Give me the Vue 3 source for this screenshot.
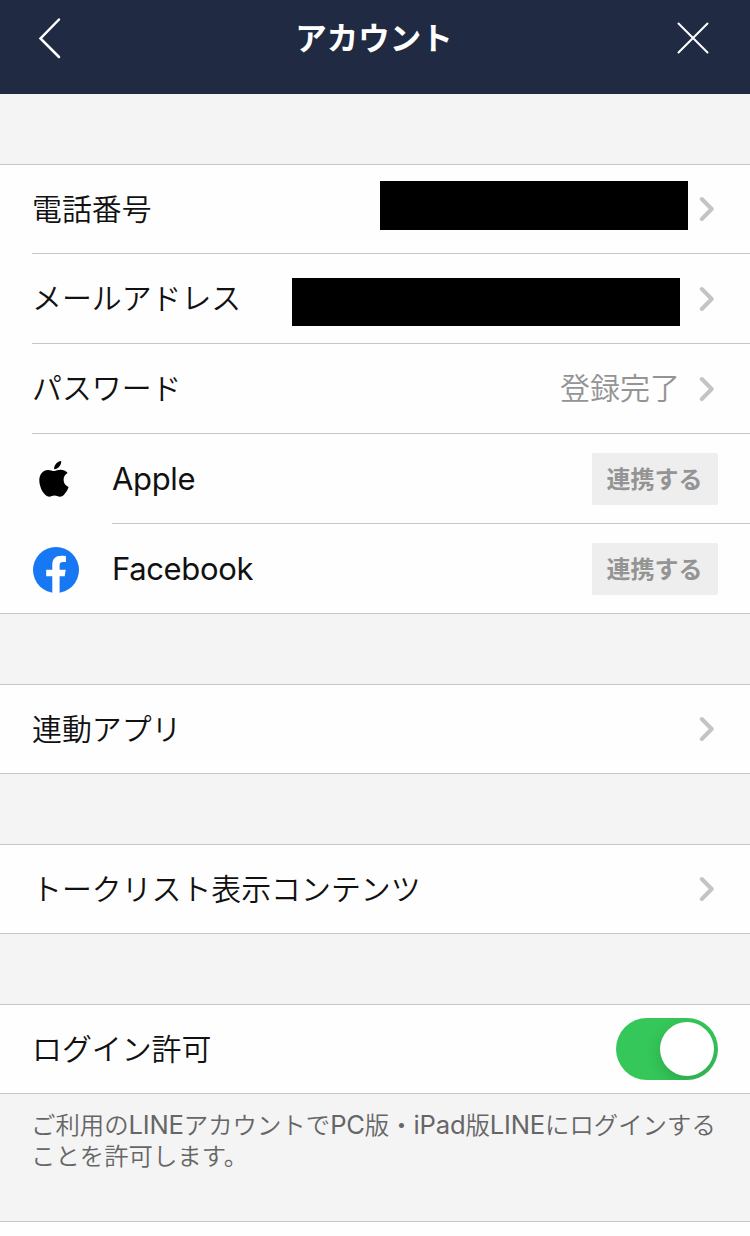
<template>
  <div class="account-page">
    <header class="header">
      <svg class="back-icon" viewBox="0 0 24 42">
        <path d="M21 2.5 2.5 21.5 21 40" />
      </svg>
      <h1 class="title">アカウント</h1>
      <svg class="close-icon" viewBox="0 0 32 32">
        <path d="M1.5 1.5 30.5 30.5M30.5 1.5 1.5 30.5" />
      </svg>
    </header>

    <section v-for="(group, index) in groups" :key="index" class="group">
      <div v-for="item in group" :key="item.label" :class="['row', { 'row-indent': item.icon }]">
        <!-- サービスアイコン -->
        <div v-if="item.icon" class="service-icon">
          <svg v-if="item.icon === 'apple'" class="apple-icon" viewBox="0 0 30 36">
            <path d="M15.2 10C13.2 10 11.4 8.8 9 8.9 3.9 9.1.3 13 .3 19.3.3 27.1 5.6 35.8 10.2 35.8c2 0 3.1-1.2 5.3-1.2s3.2 1.2 5.4 1.2c3.6 0 7.2-5.3 8.7-9.8-3.1-1.3-5-3.8-5-7.3 0-3 1.5-5 4-6.6-1.8-2.3-4.4-3.3-7-3.3-2.7 0-4.6 1.2-6.4 1.2Z" />
            <path d="M15.1 8.2C15 3.8 18.5.4 22.2.1c.3 4.2-3.2 8.2-7.1 8.1Z" />
          </svg>
          <svg v-else class="facebook-icon" viewBox="0 0 46 46">
            <circle cx="23" cy="23" r="23" fill="#1877f2" />
            <path fill="#fff" d="M19.3 46V29.2h-6.1v-6.4h6.1v-5.2c0-5.7 3.5-8.9 8.8-8.9 1.8 0 3.4.2 4.8.4v5.8h-2.8c-2.8 0-3.5 1.4-3.5 3.3v4.6h6.1l-1 6.4h-5.1V46Z" />
          </svg>
        </div>

        <span class="label">{{ item.label }}</span>

        <span v-if="item.mask" :class="['mask', item.mask]"></span>
        <span v-if="item.value" class="value">{{ item.value }}</span>
        <button v-if="item.icon" class="link-button">連携する</button>
        <button v-else-if="item.toggle" :class="['toggle', { on: loginAllowed }]" @click="loginAllowed = !loginAllowed">
          <span class="knob"></span>
        </button>
        <svg v-else class="chevron" viewBox="0 0 16 26">
          <path d="M2.8 3 12.7 13 2.8 23" />
        </svg>
      </div>
    </section>

    <p class="note">
      ご利用の<b>LINE</b>アカウントで<b>PC</b>版・<b>iPad</b>版<b>LINE</b>にログインする<br>ことを許可します。
    </p>
    <div class="next-group"></div>
  </div>
</template>

<script setup>
import { ref } from 'vue';

const loginAllowed = ref(true);

const groups = [
  [
    { label: '電話番号', mask: 'mask-phone' },
    { label: 'メールアドレス', mask: 'mask-mail' },
    { label: 'パスワード', value: '登録完了' },
    { label: 'Apple', icon: 'apple' },
    { label: 'Facebook', icon: 'facebook' }
  ],
  [{ label: '連動アプリ' }],
  [{ label: 'トークリスト表示コンテンツ' }],
  [{ label: 'ログイン許可', toggle: true }]
];
</script>

<style>
body {
  margin: 0;
  background-color: #f4f4f4;
}
</style>

<style scoped>
.account-page {
  display: flex;
  flex-direction: column;
  width: 100%;
  height: 1236px;
  overflow: hidden;
  background-color: #f4f4f4;
  color: #111;
  font-family: Inter, "Noto Sans CJK JP", sans-serif;
}

.header {
  display: flex;
  align-items: flex-start;
  justify-content: space-between;
  box-sizing: border-box;
  flex: none;
  height: 94px;
  padding: 17px 41px 0 38px;
  background-color: #202a43;
}

.header svg {
  fill: none;
  stroke: #fff;
  stroke-linecap: round;
}

.back-icon {
  width: 24px;
  height: 42px;
  stroke-width: 2.5;
}

.close-icon {
  width: 32px;
  height: 32px;
  margin-top: 5px;
  stroke-width: 2;
}

.title {
  margin: 1px 0 0 9px;
  color: #fff;
  font-size: 31.5px;
  line-height: 42px;
  font-weight: 700;
}

.group {
  flex: none;
  margin-top: 70px;
  border-top: 1px solid #c6c6c8;
  border-bottom: 1px solid #c6c6c8;
  background-color: #fefefe;
}

.row {
  position: relative;
  display: flex;
  align-items: center;
  box-sizing: border-box;
  height: 90px;
  margin-left: 32px;
  padding-right: 32px;
  border-bottom: 1px solid #c6c6c8;
}

.row:first-child {
  height: 89px;
}

.row:last-child {
  height: 89px;
  border-bottom: none;
}

.row:only-child {
  height: 88px;
}

.row-indent {
  margin-left: 112px;
}

.service-icon {
  position: absolute;
  left: -80px;
  display: flex;
  align-items: center;
  box-sizing: border-box;
  width: 48px;
  padding-left: 1px;
}

.apple-icon {
  width: 30px;
  height: 36px;
  margin-left: 5.5px;
}

.facebook-icon {
  width: 46px;
  height: 46px;
  margin-top: 2px;
}

.label {
  flex: 1;
  padding-bottom: 1px;
  font-size: 29.9px;
  line-height: 44px;
  font-weight: 350;
  white-space: nowrap;
}

.row-indent .label {
  padding-bottom: 0;
  font-size: 31px;
  font-weight: 400;
  letter-spacing: -0.35px;
}

.mask {
  background-color: #000;
}

.mask-phone {
  width: 308px;
  height: 49px;
  margin: 0 11px 7px 0;
}

.mask-mail {
  width: 388px;
  height: 48px;
  margin: 6px 19px 0 0;
}

.value {
  margin-right: 19px;
  padding-bottom: 1px;
  color: #949494;
  font-size: 30px;
  line-height: 44px;
  font-weight: 350;
}

.chevron {
  width: 16px;
  height: 26px;
  margin-right: 3px;
  fill: none;
  stroke: #c4c4c6;
  stroke-width: 4;
  stroke-linecap: round;
  stroke-linejoin: round;
}

.link-button {
  width: 126px;
  height: 52px;
  padding: 0 1px 2px 0;
  border: none;
  border-radius: 2px;
  background-color: #eee;
  color: #949494;
  font-family: inherit;
  font-size: 24px;
  font-weight: 700;
}

.toggle {
  display: flex;
  align-items: center;
  box-sizing: border-box;
  width: 102px;
  height: 62px;
  padding: 4px;
  border: none;
  border-radius: 31px;
  background-color: #e9e9eb;
  overflow: hidden;
}

.toggle.on {
  justify-content: flex-end;
  background-color: #35c759;
}

.knob {
  width: 54px;
  height: 54px;
  border-radius: 50%;
  background-color: #fff;
  box-shadow: 0 6px 16px rgba(0, 0, 0, 0.16);
}

.note {
  box-sizing: border-box;
  flex: none;
  height: 127px;
  margin: 0;
  padding: 15px 0 0 31px;
  color: #666;
  font-size: 24.4px;
  line-height: 31px;
  font-weight: 350;
  white-space: nowrap;
}

.note b {
  font-size: 25.6px;
  font-weight: 400;
  letter-spacing: -0.2px;
}

.next-group {
  flex: 1;
  border-top: 1px solid #c6c6c8;
  background-color: #fefefe;
}
</style>
